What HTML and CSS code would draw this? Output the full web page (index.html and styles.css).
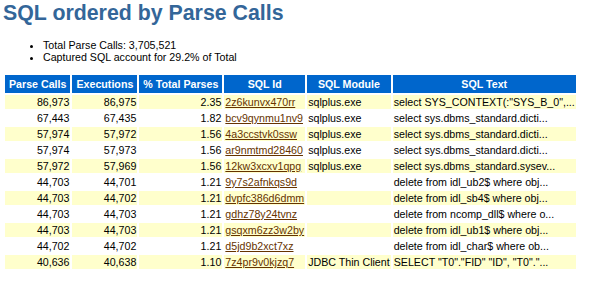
FILE: index.html
```html
<!DOCTYPE html>
<html lang="en">
<head>
  <meta charset="UTF-8">
  <title>SQL ordered by Parse Calls</title>
  <link rel="stylesheet" href="styles.css">
</head>
<body>
  <h3 class="awr">SQL ordered by Parse Calls</h3>
  <ul>
    <li class="awr">Total Parse Calls: 3,705,521</li>
    <li class="awr">Captured SQL account for 29.2% of Total</li>
  </ul>

  <table class="awr">
    <tr>
      <th class="awrbg">Parse Calls</th>
      <th class="awrbg">Executions</th>
      <th class="awrbg">% Total Parses</th>
      <th class="awrbg">SQL Id</th>
      <th class="awrbg">SQL Module</th>
      <th class="awrbg">SQL Text</th>
    </tr>
    <tr>
      <td class="awrnc num">86,973</td>
      <td class="awrnc num">86,975</td>
      <td class="awrnc num">2.35</td>
      <td class="awrnc"><a class="awr" href="#2z6kunvx470rr">2z6kunvx470rr</a></td>
      <td class="awrnc">sqlplus.exe</td>
      <td class="awrnc">select SYS_CONTEXT(:"SYS_B_0",...</td>
    </tr>
    <tr>
      <td class="awrc num">67,443</td>
      <td class="awrc num">67,435</td>
      <td class="awrc num">1.82</td>
      <td class="awrc"><a class="awr" href="#bcv9qynmu1nv9">bcv9qynmu1nv9</a></td>
      <td class="awrc">sqlplus.exe</td>
      <td class="awrc">select sys.dbms_standard.dicti...</td>
    </tr>
    <tr>
      <td class="awrnc num">57,974</td>
      <td class="awrnc num">57,972</td>
      <td class="awrnc num">1.56</td>
      <td class="awrnc"><a class="awr" href="#4a3ccstvk0ssw">4a3ccstvk0ssw</a></td>
      <td class="awrnc">sqlplus.exe</td>
      <td class="awrnc">select sys.dbms_standard.dicti...</td>
    </tr>
    <tr>
      <td class="awrc num">57,974</td>
      <td class="awrc num">57,973</td>
      <td class="awrc num">1.56</td>
      <td class="awrc"><a class="awr" href="#ar9nmtmd28460">ar9nmtmd28460</a></td>
      <td class="awrc">sqlplus.exe</td>
      <td class="awrc">select sys.dbms_standard.dicti...</td>
    </tr>
    <tr>
      <td class="awrnc num">57,972</td>
      <td class="awrnc num">57,969</td>
      <td class="awrnc num">1.56</td>
      <td class="awrnc"><a class="awr" href="#12kw3xcxv1qpg">12kw3xcxv1qpg</a></td>
      <td class="awrnc">sqlplus.exe</td>
      <td class="awrnc">select sys.dbms_standard.sysev...</td>
    </tr>
    <tr>
      <td class="awrc num">44,703</td>
      <td class="awrc num">44,701</td>
      <td class="awrc num">1.21</td>
      <td class="awrc"><a class="awr" href="#9y7s2afnkqs9d">9y7s2afnkqs9d</a></td>
      <td class="awrc"></td>
      <td class="awrc">delete from idl_ub2$ where obj...</td>
    </tr>
    <tr>
      <td class="awrnc num">44,703</td>
      <td class="awrnc num">44,702</td>
      <td class="awrnc num">1.21</td>
      <td class="awrnc"><a class="awr" href="#dvpfc386d6dmm">dvpfc386d6dmm</a></td>
      <td class="awrnc"></td>
      <td class="awrnc">delete from idl_sb4$ where obj...</td>
    </tr>
    <tr>
      <td class="awrc num">44,703</td>
      <td class="awrc num">44,703</td>
      <td class="awrc num">1.21</td>
      <td class="awrc"><a class="awr" href="#gdhz78y24tvnz">gdhz78y24tvnz</a></td>
      <td class="awrc"></td>
      <td class="awrc">delete from ncomp_dll$ where o...</td>
    </tr>
    <tr>
      <td class="awrnc num">44,703</td>
      <td class="awrnc num">44,703</td>
      <td class="awrnc num">1.21</td>
      <td class="awrnc"><a class="awr" href="#gsqxm6zz3w2by">gsqxm6zz3w2by</a></td>
      <td class="awrnc"></td>
      <td class="awrnc">delete from idl_ub1$ where obj...</td>
    </tr>
    <tr>
      <td class="awrc num">44,702</td>
      <td class="awrc num">44,702</td>
      <td class="awrc num">1.21</td>
      <td class="awrc"><a class="awr" href="#d5jd9b2xct7xz">d5jd9b2xct7xz</a></td>
      <td class="awrc"></td>
      <td class="awrc">delete from idl_char$ where ob...</td>
    </tr>
    <tr>
      <td class="awrnc num">40,636</td>
      <td class="awrnc num">40,638</td>
      <td class="awrnc num">1.10</td>
      <td class="awrnc"><a class="awr" href="#7z4pr9v0kjzq7">7z4pr9v0kjzq7</a></td>
      <td class="awrnc">JDBC Thin Client</td>
      <td class="awrnc">SELECT "T0"."FID" "ID", "T0"."...</td>
    </tr>
  </table>
</body>
</html>
```

FILE: styles.css
```css
body {
  margin: 0;
  padding: 1px 3px 0;
  font-family: "Liberation Sans", Arial, sans-serif;
  background: #fff;
}

h3.awr {
  font: bold 16pt "Liberation Sans", Arial, sans-serif;
  color: #336699;
  margin: 0;
}

ul {
  margin: 13px 0 10px;
  padding-left: 40px;
}

li.awr {
  font: 8pt "Liberation Sans", Arial, sans-serif;
  color: black;
}

table.awr {
  border-spacing: 2px;
}

th.awrbg {
  font: bold 8pt "Liberation Sans", Arial, sans-serif;
  color: white;
  background: #0066cc;
  padding: 3px 4px 3px;
  text-align: center;
}

td.awrc,
td.awrnc {
  font: 8pt "Liberation Sans", Arial, sans-serif;
  color: black;
  vertical-align: top;
  padding: 1px;
  white-space: nowrap;
}

td.awrc {
  background: white;
}

td.awrnc {
  background: #ffffcc;
}

td.num {
  text-align: right;
}

a.awr {
  color: #663300;
  text-decoration: underline;
}
```
